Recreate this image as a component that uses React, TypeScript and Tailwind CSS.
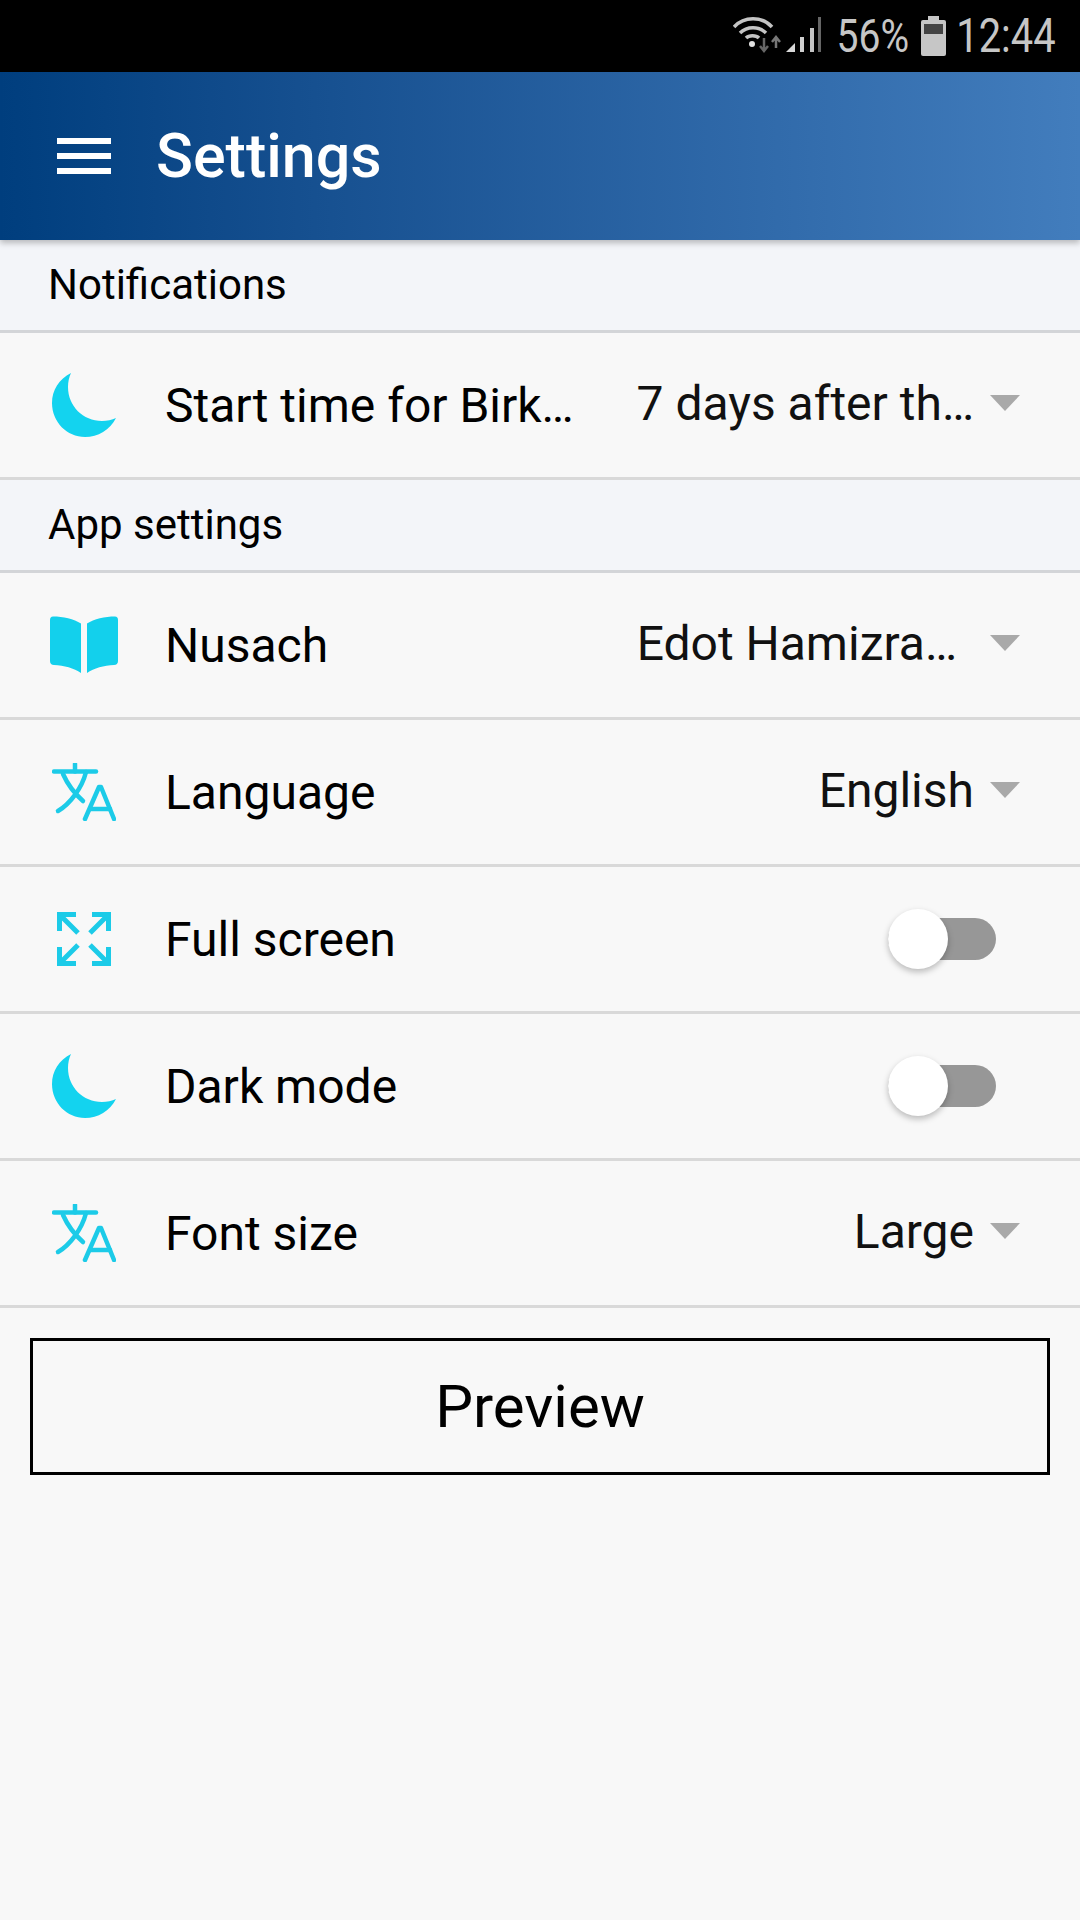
const font = "font-['Roboto',sans-serif]";

function Moon() {
  return (
    <svg viewBox="0 0 64 64" className="w-[64px] h-[64px]">
      <path d="M19 0C7 6 0 17 0 30c0 19 15 34 33 34 13 0 25-7 31-19-4 2-9 3-14 3C31 48 16 33 16 14c0-5 1-10 3-14z" fill="#13d3ef" />
    </svg>
  );
}

function Book() {
  return (
    <svg viewBox="0 0 68 57" className="w-[68px] h-[57px] mb-[2px]">
      <path d="M3 0.5C13 0.5 24 3 31 7.5V57C24 52 14 49.500 4 49 1.500 49 0 47.500 0 45V4C0 2 1 0.500 3 0.500z" fill="#13d0ec" />
      <path d="M65 0.500C55 0.500 44 3 37 7.500V57C44 52 54 49.500 64 49 66.500 49 68 47.500 68 45V4C68 2 67 0.500 65 0.500z" fill="#13d0ec" />
    </svg>
  );
}

function Translate() {
  return (
    <svg viewBox="0 0 64 58" className="w-[64px] h-[58px]" fill="none" stroke="#1ccbe8" strokeWidth="4.500" strokeLinecap="round" strokeLinejoin="round">
      <path d="M2 8.500H44" />
      <path d="M23 1V8.500" />
      <path d="M34 9C30 25 18 41 6 48" />
      <path d="M11 11C15 20 23 31 31 38" />
      <path d="M33 56L47 24H49L62 56" />
      <path d="M38 46H58" />
    </svg>
  );
}

function Expand() {
  return (
    <svg viewBox="0 0 54 54" className="w-[54px] h-[54px]" fill="none" stroke="#1ccbe8" strokeWidth="5">
      <path d="M19 2.500H2.500V19M3 3L21 21" />
      <path d="M35 2.500H51.500V19M51 3L33 21" />
      <path d="M19 51.500H2.500V35M3 51L21 33" />
      <path d="M35 51.500H51.500V35M51 51L33 33" />
    </svg>
  );
}

function Caret() {
  return <div className="w-0 h-0 border-l-[15px] border-r-[15px] border-t-[16px] border-l-transparent border-r-transparent border-t-[#a9a9a9] ml-[16px] mr-[60px] mb-[4px]" />;
}

function Toggle() {
  return (
    <div className="relative w-[108px] h-[42px] bg-[#979797] rounded-full mr-[84px] mb-[1px]">
      <div className="absolute left-0 top-[-9px] w-[60px] h-[60px] rounded-full bg-white shadow-[0_3px_6px_rgba(0,0,0,0.25)]" />
    </div>
  );
}

function Section({ title }: { title: string }) {
  return (
    <div className="h-[93px] bg-[#f3f5f9] border-b-[3px] border-[#d3d5d8] flex items-center pl-[48px]">
      <span className="text-[42px] text-black leading-none mb-[1px]">{title}</span>
    </div>
  );
}

function Row({ icon, label, children }: { icon: React.ReactNode; label: string; children: React.ReactNode }) {
  return (
    <div className="h-[147px] border-b-[3px] border-[#d9d9d9] flex items-center">
      <div className="w-[68px] ml-[50px] mr-[47px] flex justify-center">{icon}</div>
      <span className="flex-1 text-[48px] text-black leading-[56px] whitespace-nowrap mt-[2px]">{label}</span>
      {children}
    </div>
  );
}

function Value({ text, className = "" }: { text: string; className?: string }) {
  return (
    <>
      <span className={`text-[48px] text-[#111] leading-[56px] whitespace-nowrap mb-[3px] ${className}`}>{text}</span>
      <Caret />
    </>
  );
}

function StatusIcons() {
  return (
    <svg viewBox="0 0 96 40" className="w-[96px] h-[40px]">
      <g fill="none" stroke="#c4c4c4" strokeWidth="3.500">
        <path d="M1 11C11 0 29 0 39 11" />
        <path d="M7 17C14 10 26 10 33 17" />
        <path d="M13 22C16 19 23 19 26 22" />
      </g>
      <circle cx="19" cy="28" r="3" fill="#e0e0e0" />
      <path d="M31 22V35M27 30L31 35L35 30" stroke="#666" strokeWidth="2.500" fill="none" />
      <path d="M43 32V21M39 26L43 21L47 26" stroke="#777" strokeWidth="2.500" fill="none" />
      <path d="M53 36L62 27V36z" fill="#d8d8d8" />
      <path d="M67 21H71V36H67z" fill="#d0d0d0" />
      <path d="M77 12H81V36H77z" fill="#c4c4c4" />
      <path d="M85 1H88V36H85z" fill="#666" />
    </svg>
  );
}

export default function App() {
  return (
    <div className={`${font} w-[1080px] h-[1920px] bg-[#f8f8f8] flex flex-col overflow-hidden`}>
      {/* status bar */}
      <div className="h-[72px] bg-black flex items-center justify-end pr-[34px] text-[#c6c6c6]">
        <StatusIcons />
        <span className="text-[46px] leading-none scale-x-[0.85] ml-[2px] w-[74px] text-center">56%</span>
        <div className="relative w-[25px] h-[36px] bg-[#c6c6c6] rounded-[2px] ml-[16px] mr-[2px] mt-[3px]">
          <div className="absolute left-[7px] top-[-4px] w-[11px] h-[4px] bg-[#c6c6c6]" />
          <div className="absolute left-[3px] top-[4px] w-[19px] h-[10px] bg-[#444]" />
        </div>
        <span className="text-[48px] leading-none scale-x-[0.83] w-[98px] text-center whitespace-nowrap">12:44</span>
      </div>

      {/* header */}
      <div className="relative z-10 h-[168px] bg-gradient-to-r from-[#003e7e] to-[#427dbd] flex items-center shadow-[0_3px_6px_rgba(0,0,0,0.25)]">
        <div className="ml-[57px] flex flex-col gap-[9px] w-[54px]">
          <div className="h-[6px] bg-white" />
          <div className="h-[6px] bg-white" />
          <div className="h-[6px] bg-white" />
        </div>
        <span className="ml-[45px] text-[61px] font-medium text-white leading-none">Settings</span>
      </div>

      <Section title="Notifications" />
      <Row icon={<Moon />} label="Start time for Birk…">
        <Value text="7 days after th…" />
      </Row>
      <Section title="App settings" />
      <Row icon={<Book />} label="Nusach">
        <Value text="Edot Hamizra…" className="mr-[17px]" />
      </Row>
      <Row icon={<Translate />} label="Language">
        <Value text="English" />
      </Row>
      <Row icon={<Expand />} label="Full screen">
        <Toggle />
      </Row>
      <Row icon={<Moon />} label="Dark mode">
        <Toggle />
      </Row>
      <Row icon={<Translate />} label="Font size">
        <Value text="Large" />
      </Row>

      <button className="mt-[30px] mx-[30px] h-[137px] border-[3px] border-black text-[60px] text-black leading-none">
        Preview
      </button>
    </div>
  );
}
